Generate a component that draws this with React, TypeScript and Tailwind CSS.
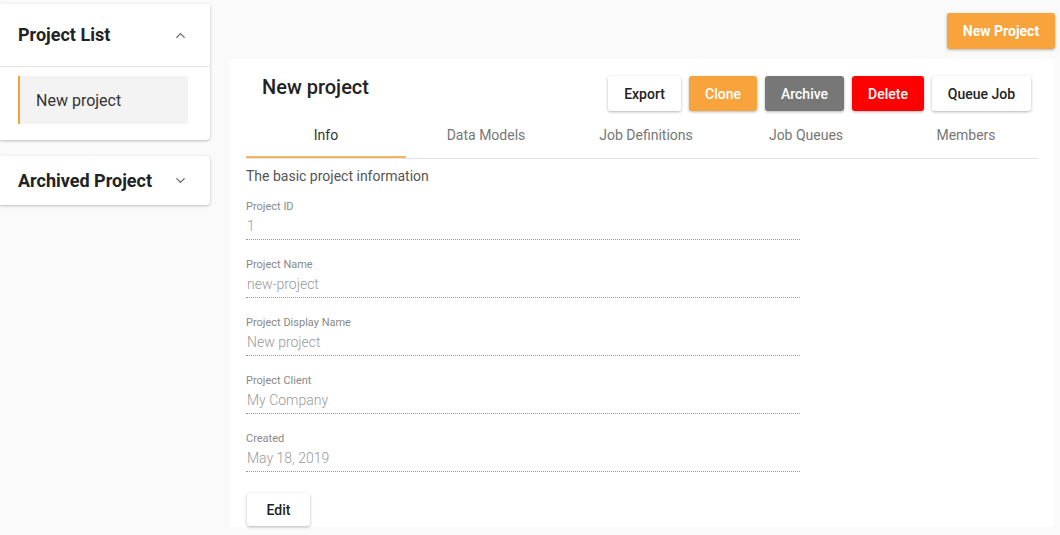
import { ChevronUp, ChevronDown } from "lucide-react";

const tabs = ["Info", "Data Models", "Job Definitions", "Job Queues", "Members"];

const fields = [
  { label: "Project ID", value: "1" },
  { label: "Project Name", value: "new-project" },
  { label: "Project Display Name", value: "New project" },
  { label: "Project Client", value: "My Company" },
  { label: "Created", value: "May 18, 2019" },
];

const raised = "shadow-[0_1px_3px_rgba(0,0,0,0.3)] rounded-[3px] h-[35px] text-sm font-medium";

export default function App() {
  return (
    <div className="flex h-[535px] bg-[#fafafa] pt-1 font-['Roboto',sans-serif] text-[#222]">
      {/* ── Sidebar ── */}
      <div className="flex w-[210px] shrink-0 flex-col gap-4">
        <div className="rounded-br bg-white pb-4 shadow-[0_1px_3px_rgba(0,0,0,0.25)]">
          <div className="flex h-[63px] items-center justify-between border-b border-[#e6e6e6] pl-[18px] pr-[22px]">
            <span className="whitespace-nowrap text-lg font-bold">Project List</span>
            <ChevronUp size={15} className="text-[#666]" />
          </div>
          <div className="ml-[18px] mr-[22px] mt-[9px] flex h-[48px] items-center border-l-2 border-[#f5a13a] bg-[#f3f3f3] pl-4 text-base text-[#333]">
            <span className="mt-px">New project</span>
          </div>
        </div>
        <div className="flex h-[49px] items-center justify-between rounded-r bg-white pl-[18px] pr-[22px] shadow-[0_1px_3px_rgba(0,0,0,0.25)]">
          <span className="whitespace-nowrap text-lg font-bold">Archived Project</span>
          <ChevronDown size={15} className="text-[#666]" />
        </div>
      </div>

      {/* ── Main ── */}
      <div className="flex min-w-0 flex-1 flex-col pl-5 pr-[6px]">
        <div className="mt-[9px] flex justify-end">
          <button className="-mr-px h-9 w-[108px] rounded-[3px] bg-[#f8a33b] text-sm font-bold text-white shadow-[0_1px_3px_rgba(0,0,0,0.3)]">
            New Project
          </button>
        </div>

        <div className="mt-[10px] h-[468px] bg-white px-4">
          <div className="mt-[17px] flex items-start justify-between pl-4 pr-[7px]">
            <h1 className="text-xl font-medium leading-[22px] text-[#222]">New project</h1>
            <div className="flex gap-2">
              <button className={`${raised} w-[73px] bg-white`}>Export</button>
              <button className={`${raised} w-[68px] bg-[#f8a33b] font-bold text-white`}>Clone</button>
              <button className={`${raised} w-[79px] bg-[#777777] font-bold text-white`}>Archive</button>
              <button className={`${raised} w-[72px] bg-[#ff0000] font-bold text-white`}>Delete</button>
              <button className={`${raised} w-[99px] bg-white`}>Queue Job</button>
            </div>
          </div>

          <div className="flex h-[48px] border-b border-[#e2e2e2]">
            {tabs.map((t, i) => (
              <div
                key={t}
                className={`relative flex w-[160px] shrink-0 items-center justify-center text-sm ${
                  i === 0 ? "text-[#333]" : "text-[#777]"
                }`}
              >
                {t}
                {i === 0 && <div className="absolute bottom-0 left-0 right-0 h-[2px] bg-[#efb563]" />}
              </div>
            ))}
          </div>

          <p className="mt-[7px] text-sm leading-5 text-[#555]">The basic project information</p>

          <div className="mt-3 flex w-[554px] flex-col gap-4">
            {fields.map((f) => (
              <div key={f.label} className="border-b border-dotted border-[#999]">
                <div className="mt-px text-[11px] leading-4 text-[#888]">{f.label}</div>
                <div className="mt-px pb-[3px] pl-px text-sm font-light leading-5 text-[#999]">{f.value}</div>
              </div>
            ))}
          </div>

          <button className="ml-px mt-[21px] h-[33px] w-[63px] rounded-[3px] bg-white text-sm font-medium shadow-[0_1px_3px_rgba(0,0,0,0.3)]">
            Edit
          </button>
        </div>
      </div>
    </div>
  );
}
